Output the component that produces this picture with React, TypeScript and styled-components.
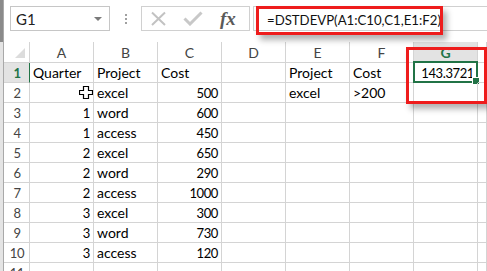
import React from "react";
import styled, { createGlobalStyle } from "styled-components";

const GlobalStyle = createGlobalStyle`
  html, body {
    margin: 0;
    padding: 0;
    background: #ffffff;
    overflow: hidden;
  }
  body {
    font-family: "Lato", "Liberation Sans", sans-serif;
  }
`;

const GREEN = "#217346";
const RED = "#ee1c1c";
const GRID = "#d4d4d4";

type CellData = { v: string; num?: boolean };

const rows: CellData[][] = [
  [{ v: "Quarter" }, { v: "Project" }, { v: "Cost" }, { v: "" }, { v: "Project" }, { v: "Cost" }, { v: "143.3721", num: true }],
  [{ v: "" }, { v: "excel" }, { v: "500", num: true }, { v: "" }, { v: "excel" }, { v: ">200" }, { v: "" }],
  [{ v: "1", num: true }, { v: "word" }, { v: "600", num: true }],
  [{ v: "1", num: true }, { v: "access" }, { v: "450", num: true }],
  [{ v: "2", num: true }, { v: "excel" }, { v: "650", num: true }],
  [{ v: "2", num: true }, { v: "word" }, { v: "290", num: true }],
  [{ v: "2", num: true }, { v: "access" }, { v: "1000", num: true }],
  [{ v: "3", num: true }, { v: "excel" }, { v: "300", num: true }],
  [{ v: "3", num: true }, { v: "word" }, { v: "730", num: true }],
  [{ v: "3", num: true }, { v: "access" }, { v: "120", num: true }],
  [],
];

const columns = ["A", "B", "C", "D", "E", "F", "G"];

const Page = styled.div`
  display: flex;
  height: 271px;
  width: 487px;
  overflow: hidden;
`;

const WindowEdge = styled.div`
  width: 3px;
  flex: none;
  background: linear-gradient(#8a8a8a 0 42px, #e4e4e4 42px);
  border-right: 1px solid #a9a9a9;
`;

const Main = styled.div`
  flex: 1;
  display: flex;
  flex-direction: column;
  min-width: 0;
`;

const TopBar = styled.div`
  height: 42px;
  flex: none;
  display: flex;
  align-items: flex-start;
  padding: 6px 0 0 6px;
  box-sizing: border-box;
`;

const NameBox = styled.div`
  width: 100px;
  height: 25px;
  box-sizing: border-box;
  border: 1px solid #c6c6c6;
  display: flex;
  align-items: center;
  justify-content: space-between;
  padding: 0 7px 0 5px;
  font-size: 15px;
  color: #222;
`;

const Caret = styled.span`
  width: 0;
  height: 0;
  border-left: 4px solid transparent;
  border-right: 4px solid transparent;
  border-top: 4px solid #7a7a7a;
`;

const Grip = styled.div`
  width: 31px;
  height: 25px;
  display: flex;
  flex-direction: column;
  align-items: center;
  justify-content: center;
  gap: 2px;
`;

const GripDot = styled.span`
  width: 2px;
  height: 2px;
  background: #a0a0a0;
`;

const Tools = styled.div`
  width: 109px;
  height: 25px;
  box-sizing: border-box;
  border: 1px solid #d0d0d0;
  display: flex;
  align-items: center;
  padding-left: 8px;
  gap: 15px;
`;

const Fx = styled.span`
  font-family: "Liberation Serif", serif;
  font-style: italic;
  font-weight: bold;
  font-size: 19px;
  color: #5a5a5a;
  margin-left: 2px;
  line-height: 1;
`;

const FormulaInput = styled.div`
  flex: 1;
  height: 25px;
  margin-left: 3px;
  box-sizing: border-box;
  border: 1px solid #d0d0d0;
  border-right: none;
  position: relative;
  display: flex;
  align-items: center;
  padding: 2px 0 0 13px;
  font-size: 13.2px;
  color: #111;
  white-space: nowrap;
`;

const Callout = styled.div<{ $w: number; $h: number; $l: number; $t: number }>`
  position: absolute;
  left: ${(p) => p.$l}px;
  top: ${(p) => p.$t}px;
  width: ${(p) => p.$w}px;
  height: ${(p) => p.$h}px;
  box-sizing: border-box;
  border: 3px solid ${RED};
  box-shadow: 4px 5px 6px rgba(0, 0, 0, 0.3);
  pointer-events: none;
  z-index: 5;
`;

const Sheet = styled.div`
  position: relative;
  display: grid;
  grid-template-columns: 26px repeat(7, 64px) 1fr;
  grid-template-rows: 21px;
  grid-auto-rows: 20px;
`;

const Corner = styled.div`
  position: relative;
  border-right: 1px solid ${GRID};
  border-bottom: 1px solid ${GRID};
  &::after {
    content: "";
    position: absolute;
    right: 4px;
    bottom: 4px;
    width: 0;
    height: 0;
    border-left: 10px solid transparent;
    border-bottom: 10px solid #dcdcdc;
  }
`;

const ColHead = styled.div<{ $active?: boolean }>`
  display: flex;
  align-items: center;
  justify-content: center;
  font-size: 14px;
  padding-top: 1px;
  color: ${(p) => (p.$active ? GREEN : "#444")};
  font-weight: ${(p) => (p.$active ? "bold" : "normal")};
  background: ${(p) => (p.$active ? "#e3e3e3" : "#fff")};
  border-right: 1px solid ${GRID};
  border-bottom: 1px solid ${(p) => (p.$active ? GREEN : GRID)};
`;

const RowHead = styled.div<{ $active?: boolean }>`
  display: flex;
  align-items: center;
  justify-content: center;
  font-size: 13px;
  letter-spacing: -0.3px;
  color: ${(p) => (p.$active ? GREEN : "#444")};
  font-weight: ${(p) => (p.$active ? "bold" : "normal")};
  background: ${(p) => (p.$active ? "#e3e3e3" : "#fff")};
  border-right: 1px solid ${(p) => (p.$active ? GREEN : GRID)};
  border-bottom: 1px solid ${GRID};
  padding-left: 1px;
`;

const Cell = styled.div<{ $num?: boolean }>`
  position: relative;
  display: flex;
  align-items: center;
  justify-content: ${(p) => (p.$num ? "flex-end" : "flex-start")};
  padding: 0 3px;
  font-size: ${(p) => (p.$num ? "13px" : "14px")};
  letter-spacing: ${(p) => (p.$num ? "-0.4px" : "0")};
  color: #000;
  white-space: nowrap;
  border-right: 1px solid ${GRID};
  border-bottom: 1px solid ${GRID};
`;

const ActiveFrame = styled.div`
  position: absolute;
  left: -1px;
  top: -2px;
  right: -1px;
  bottom: -1px;
  border: 2px solid ${GREEN};
  pointer-events: none;
  &::after {
    content: "";
    position: absolute;
    right: -4px;
    bottom: -4px;
    width: 6px;
    height: 6px;
    background: ${GREEN};
    border: 1px solid #fff;
  }
`;

const Cursor = styled.svg`
  position: absolute;
  left: 75px;
  top: 44px;
  z-index: 4;
`;

const CrossIcon = () => (
  <svg width="18" height="16" viewBox="0 0 18 16">
    <path d="M2 1.5 L15 14 M15 1.5 L2 14" stroke="#c2c2c2" strokeWidth="2" fill="none" />
  </svg>
);

const CheckIcon = () => (
  <svg width="20" height="15" viewBox="0 0 20 15">
    <path d="M1.5 7.5 L7 13 L18.5 1.5" stroke="#c8c8c8" strokeWidth="3" fill="none" />
  </svg>
);

export default function App() {
  return (
    <>
      <GlobalStyle />
      <Page>
        <WindowEdge />
        <Main>
          <TopBar>
            <NameBox>
              <span>G1</span>
              <Caret />
            </NameBox>
            <Grip>
              <GripDot />
              <GripDot />
              <GripDot />
            </Grip>
            <Tools>
              <CrossIcon />
              <CheckIcon />
              <Fx>fx</Fx>
            </Tools>
            <FormulaInput>
              =DSTDEVP(A1:C10,C1,E1:F2)
              <Callout $l={2} $t={-1} $w={187} $h={29} />
            </FormulaInput>
          </TopBar>
          <Sheet>
            <Corner />
            {columns.map((c) => (
              <ColHead key={c} $active={c === "G"}>
                {c}
              </ColHead>
            ))}
            <ColHead />
            {rows.map((row, r) => (
              <React.Fragment key={r}>
                <RowHead $active={r === 0}>{r + 1}</RowHead>
                {columns.map((c, ci) => {
                  const d = row[ci];
                  return (
                    <Cell key={c} $num={d?.num}>
                      {d?.v}
                      {r === 0 && c === "G" && <ActiveFrame />}
                    </Cell>
                  );
                })}
                <Cell />
              </React.Fragment>
            ))}
            <Callout $l={402} $t={5} $w={81} $h={57} />
            <Cursor width="14" height="13" viewBox="0 0 14 13">
              <path
                d="M4.5 0.5 H9.5 V4.5 H13.5 V8.5 H9.5 V12.5 H4.5 V8.5 H0.5 V4.5 H4.5 Z"
                fill="#fff"
                stroke="#000"
                strokeWidth="1.2"
              />
            </Cursor>
          </Sheet>
        </Main>
      </Page>
    </>
  );
}
